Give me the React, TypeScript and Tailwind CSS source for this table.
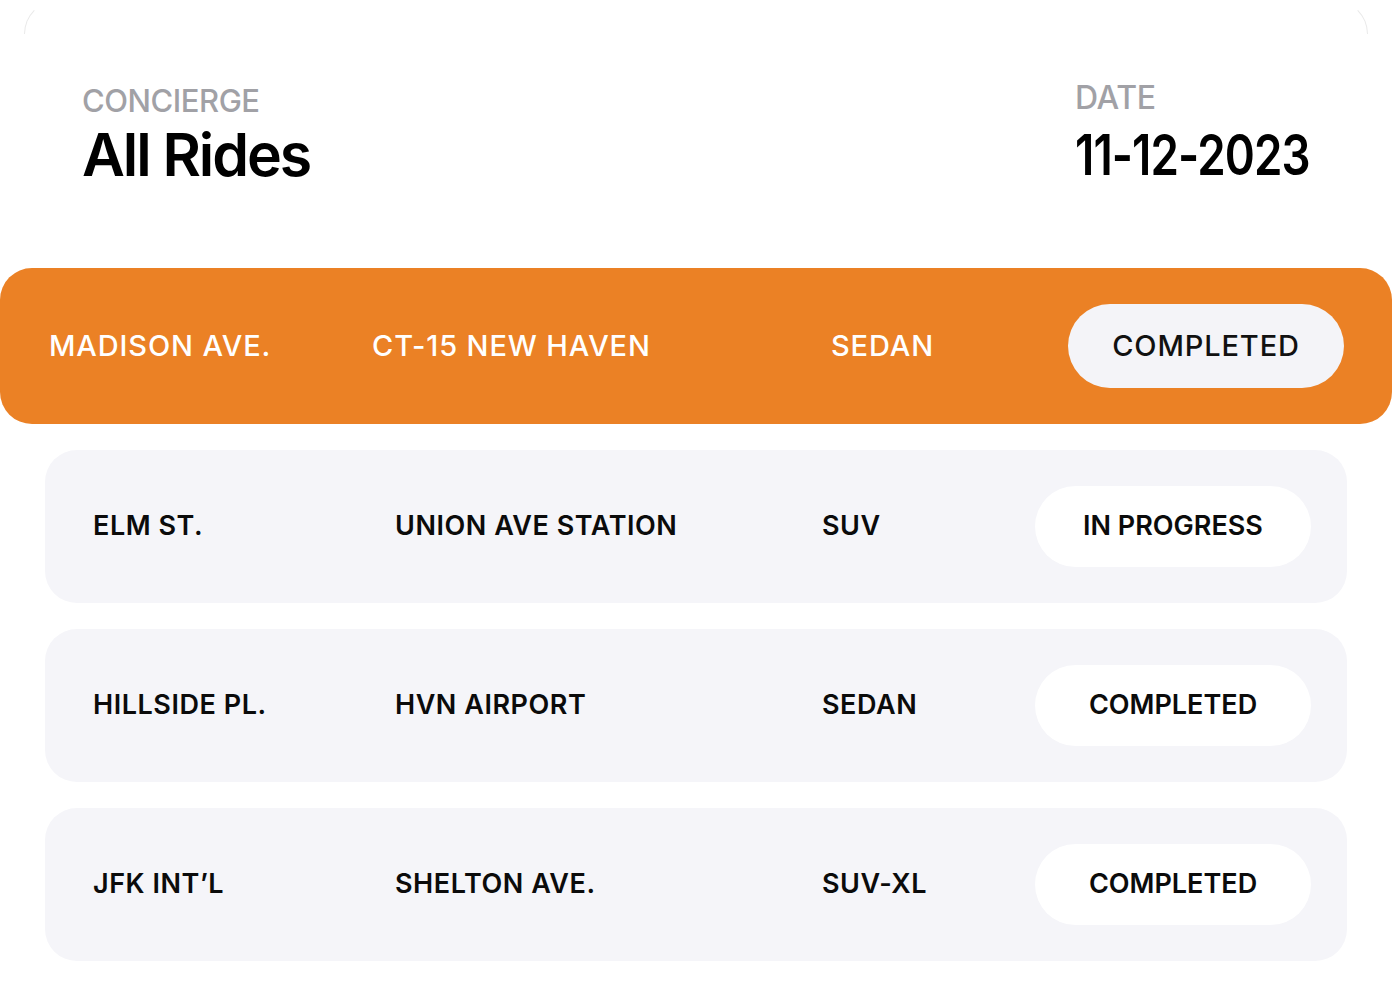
import React from "react";

type Ride = {
  from: string;
  to: string;
  vehicle: string;
  status: string;
};

const rides: Ride[] = [
  { from: "ELM ST.", to: "UNION AVE STATION", vehicle: "SUV", status: "IN PROGRESS" },
  { from: "HILLSIDE PL.", to: "HVN AIRPORT", vehicle: "SEDAN", status: "COMPLETED" },
  { from: "JFK INT\u2019L", to: "SHELTON AVE.", vehicle: "SUV-XL", status: "COMPLETED" },
];

const font = { fontFamily: "Inter, 'Noto Sans', sans-serif" };

export default function App() {
  return (
    <div className="w-[1392px] h-[993px] bg-white overflow-hidden" style={font}>
      {/* faint card edge at the top */}
      <div className="mx-[24px] h-[34px] rounded-t-[34px] border border-b-0 border-[#e9e9e9] border-t-transparent" />

      <header className="flex justify-between pl-[82px] pr-[84px] -mt-[34px] pt-[82px]">
        <div className="flex flex-col">
          <span className="text-[31px] leading-none text-[#a1a1a6] font-medium tracking-[-0.015em] pt-[3px]">
            CONCIERGE
          </span>
          <span className="text-[59px] leading-none text-black font-semibold tracking-[-0.035em] mt-[9px]">
            All Rides
          </span>
        </div>
        <div className="flex flex-col w-[233px]">
          <span className="text-[32px] leading-none text-[#a1a1a6] font-medium tracking-[-0.01em]">
            DATE
          </span>
          <span className="text-[56px] leading-none text-black font-semibold tracking-[-0.02em] mt-[13px] whitespace-nowrap origin-left scale-x-[0.815]">
            11-12-2023
          </span>
        </div>
      </header>

      <section className="mt-[84px] flex flex-col">
        <div className="h-[156px] rounded-[32px] bg-[#eb8125] grid grid-cols-[323px_459px_1fr_276px] items-center pl-[49px] pr-[48px] text-white text-[29px] font-medium tracking-[0.03em]">
          <span>MADISON AVE.</span>
          <span>CT-15 NEW HAVEN</span>
          <span>SEDAN</span>
          <span className="h-[84px] rounded-full bg-[#f4f4f8] text-[#111] flex items-center justify-center">
            COMPLETED
          </span>
        </div>

        <div className="mt-[26px] flex flex-col gap-[26px] mx-[45px]">
          {rides.map((ride) => (
            <div
              key={ride.from}
              className="h-[153px] rounded-[32px] bg-[#f5f5f9] grid grid-cols-[302px_427px_1fr_276px] items-center pl-[48px] pr-[36px] text-[#0b0b0b] text-[27px] font-semibold tracking-[0.02em]"
            >
              <span>{ride.from}</span>
              <span>{ride.to}</span>
              <span>{ride.vehicle}</span>
              <span className="h-[81px] rounded-full bg-white flex items-center justify-center tracking-normal">
                {ride.status}
              </span>
            </div>
          ))}
        </div>
      </section>
    </div>
  );
}
